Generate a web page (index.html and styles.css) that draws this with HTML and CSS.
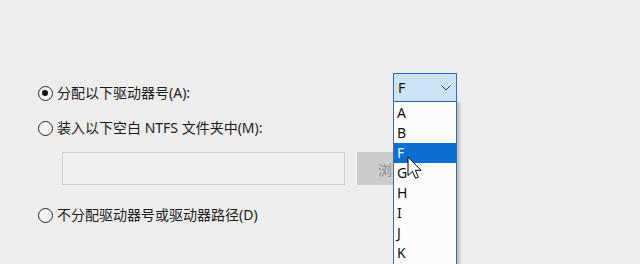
FILE: index.html
```html
<!DOCTYPE html>
<html lang="zh-CN">
<head>
<meta charset="utf-8">
<title>分配驱动器号</title>
<link rel="stylesheet" href="styles.css">
</head>
<body>
<div class="dialog">
  <div class="row row-assign">
    <label class="radio-label">
      <span class="radio checked"></span>
      <span>分配以下驱动器号(A):</span>
    </label>
    <div class="combo-wrap">
      <div class="combo">
        <span class="combo-value">F</span>
        <svg class="chevron" width="10" height="6" viewBox="0 0 10 6"><path d="M0.5 0.5 L5 5 L9.5 0.5" fill="none" stroke="#3a3a3a" stroke-width="1"/></svg>
      </div>
      <ul class="droplist">
        <li>A</li>
        <li>B</li>
        <li class="selected">F</li>
        <li>G</li>
        <li>H</li>
        <li>I</li>
        <li>J</li>
        <li>K</li>
      </ul>
    </div>
  </div>
  <div class="row row-mount">
    <label class="radio-label">
      <span class="radio"></span>
      <span>装入以下空白 NTFS 文件夹中(M):</span>
    </label>
  </div>
  <div class="row row-path">
    <div class="textbox"></div>
    <div class="button">浏览(B)...</div>
  </div>
  <div class="row row-none">
    <label class="radio-label">
      <span class="radio"></span>
      <span>不分配驱动器号或驱动器路径(D)</span>
    </label>
  </div>
  <svg class="cursor" width="15" height="24" viewBox="0 0 15 24">
    <path d="M1 1 L1 19.5 L5.4 15.3 L8.6 22.3 L11.4 21.1 L8.3 14.3 L14 14.3 Z" fill="#ffffff" stroke="#000000" stroke-width="1" stroke-linejoin="miter"/>
  </svg>
</div>
</body>
</html>
```
FILE: styles.css
```css
html, body {
  margin: 0;
  padding: 0;
}
body {
  background: #ededed;
  font-family: "Noto Sans", "Noto Sans CJK SC", sans-serif;
  font-size: 14px;
  color: #1b1b1b;
}
.dialog {
  position: relative;
  width: 640px;
  height: 264px;
  overflow: hidden;
  box-sizing: border-box;
  padding: 73px 0 0 38px;
}
.row {
  display: flex;
  align-items: flex-start;
}
.radio-label {
  display: flex;
  align-items: center;
  gap: 4px;
  height: 16px;
  line-height: 16px;
  white-space: nowrap;
}
.radio {
  box-sizing: border-box;
  width: 15px;
  height: 15px;
  border: 1.3px solid #262626;
  border-radius: 50%;
  background: #f4f4f4;
  position: relative;
  flex: none;
}
.radio.checked::after {
  content: "";
  position: absolute;
  left: 3px;
  top: 3px;
  width: 6.4px;
  height: 6.4px;
  border-radius: 50%;
  background: #111;
}
.row-assign {
  height: 29px;
}
.row-assign .radio-label {
  margin-top: 12px;
  width: 355px;
}
.combo-wrap {
  position: relative;
  width: 64px;
  height: 29px;
}
.combo {
  box-sizing: border-box;
  width: 64px;
  height: 29px;
  border: 1px solid #2a6cb5;
  background: #cce3f6;
  display: flex;
  align-items: center;
  justify-content: space-between;
  padding: 0 5px 0 4px;
}
.combo-value {
  font-size: 14px;
  color: #111;
}
.chevron {
  margin-top: 1px;
}
.droplist {
  position: absolute;
  top: 29px;
  left: 0;
  width: 64px;
  height: 180px;
  box-sizing: border-box;
  margin: 0;
  padding: 1px 0 0;
  list-style: none;
  background: #fcfcfc;
  border-left: 1px solid #3f6c9c;
  border-right: 1px solid #3f6c9c;
  box-shadow: 3px 0 2px rgba(0, 0, 0, 0.18);
  z-index: 2;
}
.droplist li {
  height: 20px;
  line-height: 20px;
  padding-left: 3px;
  font-size: 14px;
  color: #111;
}
.droplist li.selected {
  background: #0a6fd0;
  color: #e6f1ff;
}
.row-mount {
  margin-top: 18px;
}
.row-path {
  margin-top: 16px;
  margin-left: 24px;
  gap: 12px;
}
.textbox {
  box-sizing: border-box;
  width: 283px;
  height: 33px;
  border: 1px solid #cdcdcd;
  background: #efefef;
}
.button {
  box-sizing: border-box;
  width: 100px;
  height: 33px;
  background: #cccccc;
  color: #8a8a8a;
  display: flex;
  align-items: center;
  padding-left: 21px;
  white-space: nowrap;
}
.row-none {
  margin-top: 22px;
}
.cursor {
  position: absolute;
  left: 407px;
  top: 156px;
  z-index: 3;
}
```
